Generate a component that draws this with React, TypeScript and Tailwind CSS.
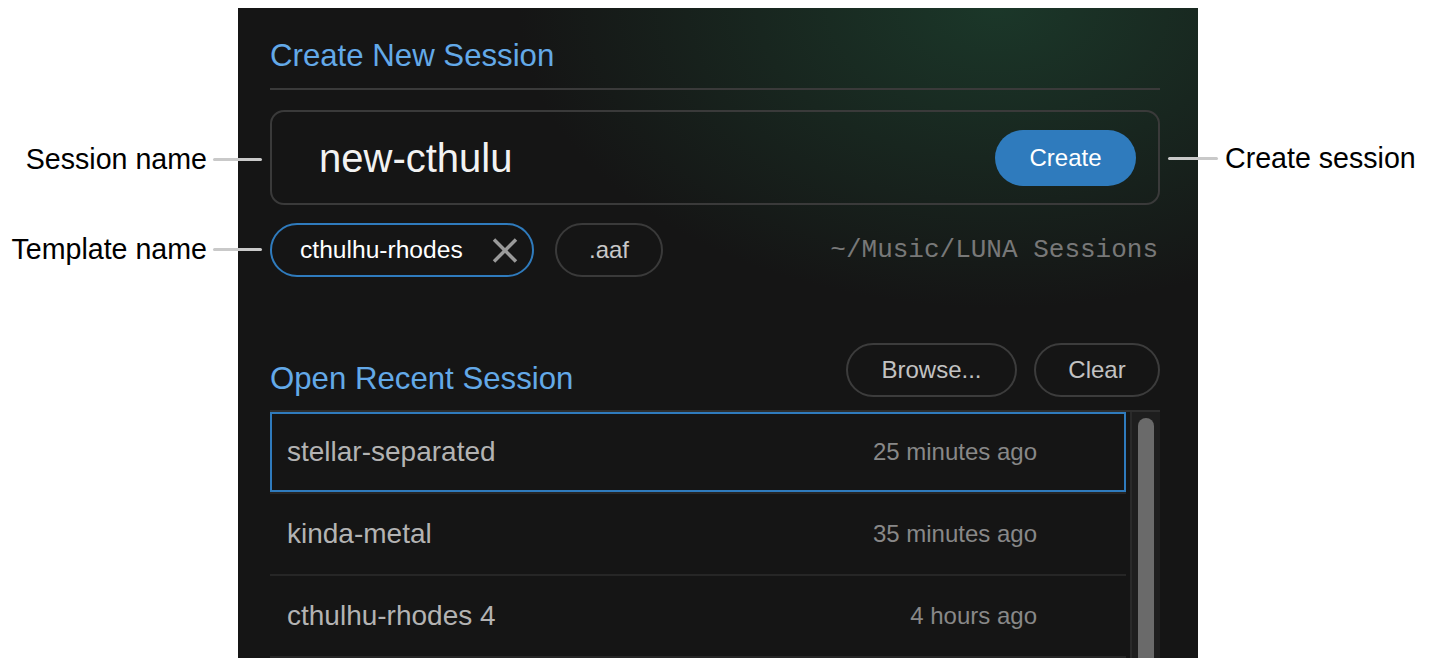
import React from "react";

interface SessionRow {
  name: string;
  when: string;
  selected?: boolean;
}

const recent: SessionRow[] = [
  { name: "stellar-separated", when: "25 minutes ago", selected: true },
  { name: "kinda-metal", when: "35 minutes ago" },
  { name: "cthulhu-rhodes 4", when: "4 hours ago" },
];

const Callout: React.FC<{ label: string; side: "left" | "right" }> = ({ label, side }) => (
  <div className="flex h-[34px] items-center">
    {side === "right" && <div className="mr-[7px] h-[3px] w-[50px] rounded-full bg-[#c9c9c9]" />}
    <span className="text-[28.6px] leading-none text-black whitespace-nowrap">{label}</span>
    {side === "left" && <div className="ml-[6px] h-[3px] w-[49px] rounded-full bg-[#c9c9c9]" />}
  </div>
);

const App: React.FC = () => {
  return (
    <div className="flex h-[668px] w-[1442px] overflow-hidden bg-white font-['Liberation_Sans',Arial,sans-serif]">
      {/* left callouts */}
      <div className="relative z-10 flex w-[262px] shrink-0 flex-col items-end pt-[142px]">
        <Callout label="Session name" side="left" />
        <div className="mt-[56px]">
          <Callout label="Template name" side="left" />
        </div>
      </div>

      {/* panel */}
      <div className="-ml-[24px] mt-[8px] h-[650px] w-[960px] shrink-0 overflow-hidden bg-[#151515] bg-[radial-gradient(ellipse_480px_300px_at_760px_0px,#1b3729_0%,#151515_100%)] pl-[32px] pr-[38px] pt-[30px]">
        <h2 className="h-[36px] text-[31.2px] leading-[36px] text-[#63a9e8]">Create New Session</h2>
        <div className="mt-[14px] h-[2px] bg-[#3a3a3a]" />

        <div className="mt-[20px] flex h-[95px] items-center justify-between rounded-[14px] border-2 border-[#3a3a3a] pl-[47px] pr-[22px]">
          <span className="text-[40px] leading-none text-[#f2f2f2]">new-cthulu</span>
          <button className="flex h-[56px] w-[141px] items-center justify-center rounded-full bg-[#2f7bbd] text-[24px] text-white">
            Create
          </button>
        </div>

        <div className="mt-[18px] flex h-[54px] items-center">
          <div className="flex h-[54px] w-[264px] items-center rounded-full border-2 border-[#2f7bbd] pl-[28px] pr-[14px]">
            <span className="text-[24.6px] leading-none text-white">cthulhu-rhodes</span>
            <svg className="ml-auto" width="26" height="25" viewBox="0 0 26 25" fill="none">
              <path d="M2 1.5 L24 23.5 M24 1.5 L2 23.5" stroke="#9a9a9a" strokeWidth="3.5" />
            </svg>
          </div>
          <div className="ml-[21px] flex h-[54px] w-[108px] items-center justify-center rounded-full border-2 border-[#3a3a3a] text-[24px] text-[#c8c8c8]">
            .aaf
          </div>
          <span className="ml-auto pr-[2px] font-['Liberation_Mono',monospace] text-[26px] leading-none text-[#787878]">
            ~/Music/LUNA Sessions
          </span>
        </div>

        <div className="mt-[66px] flex h-[54px] items-end">
          <h2 className="h-[36px] text-[31.2px] leading-[36px] text-[#63a9e8]">Open Recent Session</h2>
          <div className="ml-auto flex gap-[17px]">
            <button className="h-[54px] w-[171px] rounded-full border-2 border-[#3c3c3c] text-[24px] text-[#c2c2c2]">
              Browse...
            </button>
            <button className="h-[54px] w-[126px] rounded-full border-2 border-[#3c3c3c] text-[24px] text-[#c2c2c2]">
              Clear
            </button>
          </div>
        </div>

        <div className="mt-[13px] flex border-t-2 border-[#2e2e2e]">
          <div className="flex w-[856px] flex-col">
            {recent.map((row, i) => (
              <div key={i} className="h-[82px] shrink-0 border-b-2 border-[#262626]">
                <div
                  className={
                    row.selected
                      ? "flex h-[80px] items-center border-2 border-[#2f7bbd] pl-[15px] pr-[87px]"
                      : "flex h-[80px] items-center pl-[17px] pr-[89px]"
                  }
                >
                  <span className="text-[28px] leading-none text-[#b3b3b3]">{row.name}</span>
                  <span className="ml-auto text-[24px] leading-none text-[#888888]">{row.when}</span>
                </div>
              </div>
            ))}
          </div>
          <div className="ml-[4px] flex w-[30px] justify-center border-l-2 border-[#2a2a2a] bg-[#1e1e1e] pt-[6px]">
            <div className="h-[400px] w-[16px] rounded-full bg-[#6a6a6a]" />
          </div>
        </div>
      </div>

      {/* right callout */}
      <div className="relative z-10 -ml-[30px] pt-[141px]">
        <Callout label="Create session" side="right" />
      </div>
    </div>
  );
};

export default App;
